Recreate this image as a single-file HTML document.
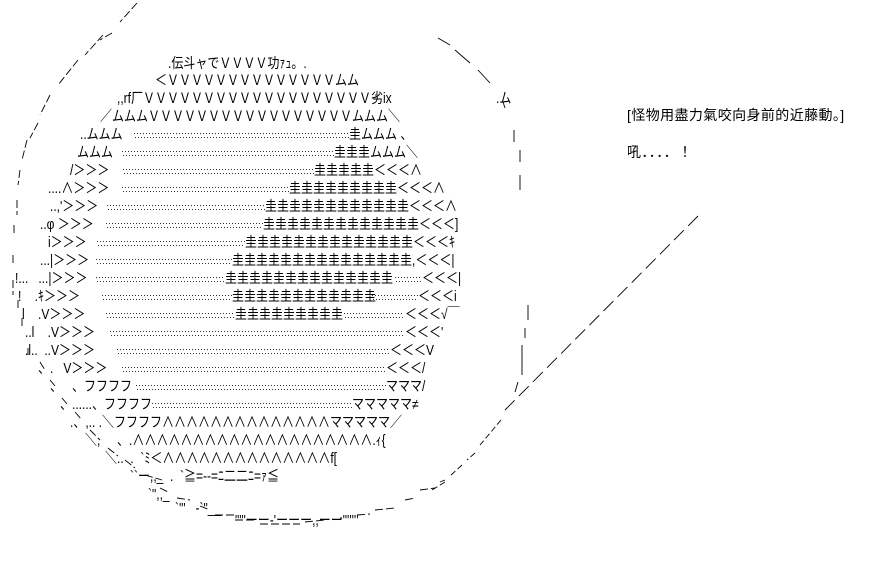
<!DOCTYPE html>
<html><head><meta charset="utf-8"><style>
html,body{margin:0;padding:0;background:#fff;width:885px;height:566px;overflow:hidden;position:relative}
.s{position:absolute;font-family:"Liberation Sans","Noto Sans CJK JP",sans-serif;font-size:12px;line-height:16px;white-space:nowrap;color:#000;font-weight:400;transform:scaleY(1.2);transform-origin:0 50%}
.d{position:absolute;height:5px;background:
repeating-linear-gradient(90deg,#000 0 1px,transparent 1px 3px) 0 0/100% 1px no-repeat,
repeating-linear-gradient(90deg,#000 0 1px,transparent 1px 3px) 1px 4px/100% 1px no-repeat;opacity:.8}
.t{position:absolute;font-family:"Liberation Sans","Noto Sans CJK JP",sans-serif;font-size:14px;line-height:18px;white-space:nowrap;color:#000;letter-spacing:.4px;font-weight:400}
svg{position:absolute;left:0;top:0}
</style></head><body>
<svg width="885" height="566">
<g fill="none" stroke="#000" stroke-width="0.9">
<path d="M137 3 L120 22 M112 33 L100 40 M103 35 L85 55 M78 60 L58 85 M50 95 L40 115 M38 123 L30 138 M27 140 L22 160 M20 170 L18 185 M17 200 L17 215 M14 225 L14 235 M13 255 L13 265 M13 280 L13 295 M18 300 L18 310 M22 318 L22 328 M28 348 L28 355 M40 362 L45 370 M50 380 L55 386 M62 398 L67 404 M75 412 L82 420 M90 430 L100 440 M108 448 L118 456 M125 460 L135 468 M145 475 L162 480 M160 488 L168 492 M177 498 L190 500 M200 506 L210 510 M215 515 L235 515 M235 520 L255 520 M260 524 L300 524 M305 522 L325 520 M340 518 L342 518 M357 515 L370 514 M375 510 L395 508 M405 500 L415 498 M420 490 L435 488 M440 482 L445 480" stroke-dasharray="8 3"/>
<path d="M438 38 L450 45 M455 50 L470 63 M478 70 L490 83 M503 102 L505 108 M514 130 L514 142 M520 150 L520 162 M520 175 L520 190 M528 305 L528 320 M525 328 L525 338 M522 345 L522 375 M518 382 L515 392" />
<path d="M698 216 L505 410" stroke-dasharray="14 6"/>
<path d="M501 420 L480 445 M475 453 L467 460 M462 465 L450 476 M445 482 L432 490" stroke-dasharray="6 3"/>
</g></svg>

<div class="s" style="left:168px;top:55px">.伝斗ャでＶＶＶＶ功ｧｭ。.</div>
<div class="s" style="left:155px;top:72px">＜ＶＶＶＶＶＶＶＶＶＶＶＶＶＶムム</div>
<div class="s" style="left:117px;top:90px">,,rf厂ＶＶＶＶＶＶＶＶＶＶＶＶＶＶＶＶＶＶＶ劣ix</div>
<div class="s" style="left:496px;top:90px">.ム</div>
<div class="s" style="left:100px;top:108px">／ムムムＶＶＶＶＶＶＶＶＶＶＶＶＶＶＶＶＶムムム＼</div>

<div class="s" style="left:80px;top:126px">..ムムム</div><i class="d" style="left:134px;top:133px;width:215px"></i><div class="s" style="left:349px;top:126px">圭ムムム 、</div>
<div class="s" style="left:77px;top:144px">ムムム</div><i class="d" style="left:122px;top:151px;width:212px"></i><div class="s" style="left:334px;top:144px">圭圭圭ムムム＼</div>
<div class="s" style="left:70px;top:162px">/＞＞＞</div><i class="d" style="left:123px;top:169px;width:191px"></i><div class="s" style="left:314px;top:162px">圭圭圭圭圭＜＜＜∧</div>
<div class="s" style="left:48px;top:180px">....∧＞＞＞</div><i class="d" style="left:122px;top:187px;width:167px"></i><div class="s" style="left:289px;top:180px">圭圭圭圭圭圭圭圭圭＜＜＜∧</div>
<div class="s" style="left:50px;top:198px">..,'＞＞＞</div><i class="d" style="left:107px;top:205px;width:158px"></i><div class="s" style="left:265px;top:198px">圭圭圭圭圭圭圭圭圭圭圭圭＜＜＜∧</div>
<div class="s" style="left:40px;top:216px">..φ ＞＞＞</div><i class="d" style="left:106px;top:223px;width:157px"></i><div class="s" style="left:263px;top:216px">圭圭圭圭圭圭圭圭圭圭圭圭圭＜＜＜]</div>
<div class="s" style="left:48px;top:234px">i＞＞＞</div><i class="d" style="left:97px;top:241px;width:148px"></i><div class="s" style="left:245px;top:234px">圭圭圭圭圭圭圭圭圭圭圭圭圭圭＜＜＜ｷ</div>
<div class="s" style="left:40px;top:252px">...|＞＞＞</div><i class="d" style="left:96px;top:259px;width:136px"></i><div class="s" style="left:232px;top:252px">圭圭圭圭圭圭圭圭圭圭圭圭圭圭圭,＜＜＜|</div>
<div class="s" style="left:15px;top:270px">!...&nbsp;&nbsp;&nbsp;...|＞＞＞</div><i class="d" style="left:96px;top:277px;width:129px"></i><div class="s" style="left:225px;top:270px">圭圭圭圭圭圭圭圭圭圭圭圭圭圭</div><i class="d" style="left:395px;top:277px;width:26px"></i><div class="s" style="left:422px;top:270px">＜＜＜|</div>
<div class="s" style="left:18px;top:288px">!&nbsp;&nbsp;&nbsp;&nbsp;.ｷ＞＞＞</div><i class="d" style="left:102px;top:295px;width:130px"></i><div class="s" style="left:232px;top:288px">圭圭圭圭圭圭圭圭圭圭圭圭</div><i class="d" style="left:372px;top:295px;width:46px"></i><div class="s" style="left:418px;top:288px">＜＜＜i</div>
<div class="s" style="left:22px;top:306px">l&nbsp;&nbsp;&nbsp;&nbsp;.V＞＞＞</div><i class="d" style="left:106px;top:313px;width:129px"></i><div class="s" style="left:235px;top:306px">圭圭圭圭圭圭圭圭圭</div><i class="d" style="left:344px;top:313px;width:60px"></i><div class="s" style="left:405px;top:306px">＜＜＜√￣</div>
<div class="s" style="left:25px;top:324px">..l&nbsp;&nbsp;&nbsp;&nbsp;.V＞＞＞</div><i class="d" style="left:110px;top:331px;width:294px"></i><div class="s" style="left:405px;top:324px">＜＜＜'</div>
<div class="s" style="left:25px;top:342px">.l..&nbsp;&nbsp;..V＞＞＞</div><i class="d" style="left:117px;top:349px;width:272px"></i><div class="s" style="left:390px;top:342px">＜＜＜V</div>
<div class="s" style="left:38px;top:360px">、.&nbsp;&nbsp;&nbsp;V＞＞＞</div><i class="d" style="left:122px;top:367px;width:263px"></i><div class="s" style="left:386px;top:360px">＜＜＜/</div>
<div class="s" style="left:50px;top:378px">、&nbsp;&nbsp;&nbsp;、フフフフ</div><i class="d" style="left:136px;top:385px;width:250px"></i><div class="s" style="left:386px;top:378px">マママ/</div>
<div class="s" style="left:60px;top:396px">、......、フフフフ</div><i class="d" style="left:152px;top:403px;width:200px"></i><div class="s" style="left:352px;top:396px">マママママ≠</div>
<div class="s" style="left:70px;top:414px">.、,..&nbsp;.＼フフフフ∧∧∧∧∧∧∧∧∧∧∧∧∧∧マママママ／</div>
<div class="s" style="left:85px;top:432px">＼,&nbsp;&nbsp;&nbsp;&nbsp;&nbsp;、.∧∧∧∧∧∧∧∧∧∧∧∧∧∧∧∧∧∧∧∧.ｨ{</div>
<div class="s" style="left:105px;top:450px">＼..&nbsp;&nbsp;.&nbsp;&nbsp;`ﾐ＜∧∧∧∧∧∧∧∧∧∧∧∧∧∧f[</div>
<div class="s" style="left:130px;top:468px">``ー,,_&nbsp;&nbsp;.&nbsp;&nbsp;`≧=‐-=ﾆ二二ﾆ=ｧ≦</div>
<div class="s" style="left:148px;top:486px">`",,_</div>
<div class="s" style="left:175px;top:500px">`'"&nbsp;&nbsp;&nbsp;-`"__</div>
<div class="s" style="left:235px;top:512px">"'"ーー-'ーーー,,ーー"'''''</div>

<div class="t" style="left:627px;top:106px">[怪物用盡力氣咬向身前的近藤動。]</div>
<div class="t" style="left:627px;top:143px">吼．．．．！</div>
</body></html>
